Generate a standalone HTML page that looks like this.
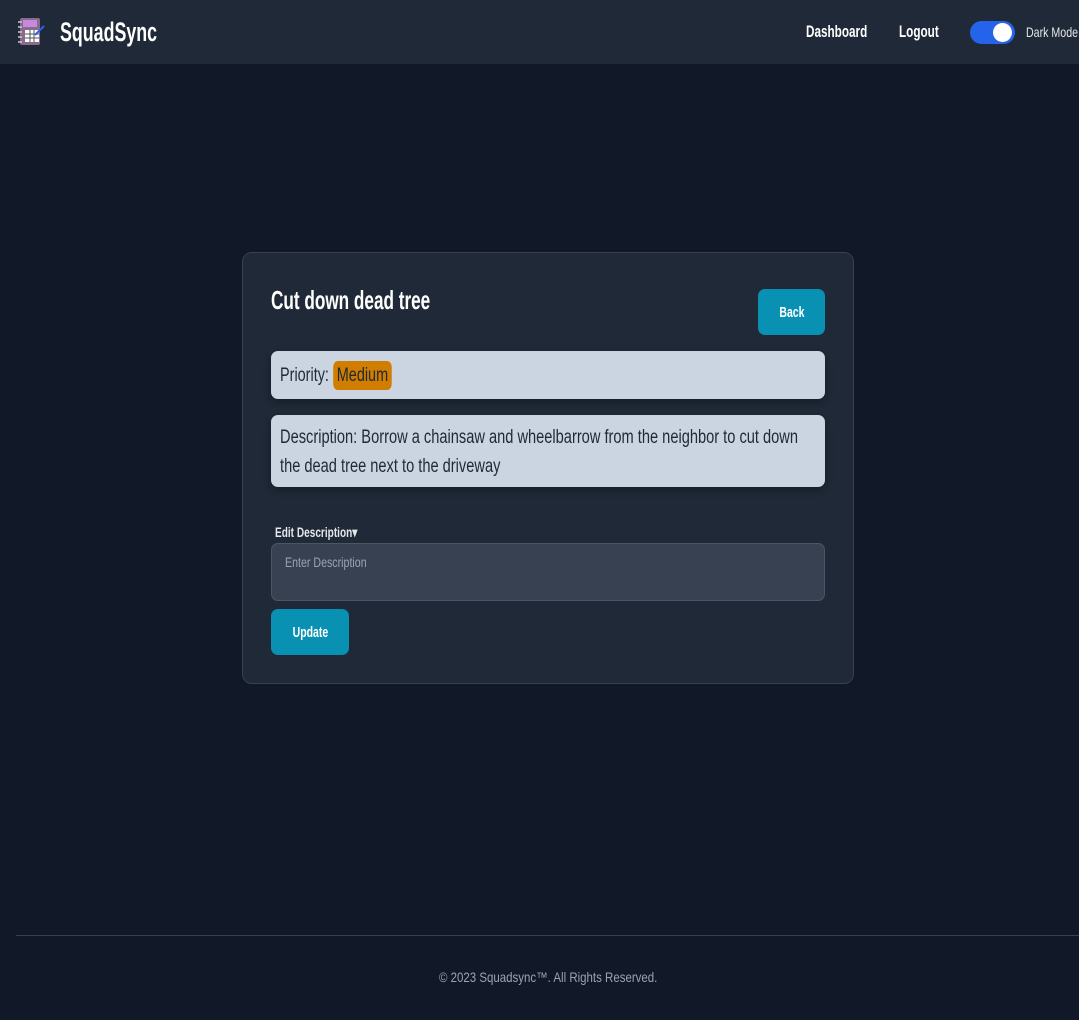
<!DOCTYPE html>
<html><head><meta charset="utf-8"><style>
*{box-sizing:border-box;margin:0;padding:0}
body{width:1079px;height:1020px;background:#111827;font-family:"Liberation Sans",sans-serif;color:#fff;position:relative;overflow:hidden}
.c{display:inline-block;transform:scaleX(.76);transform-origin:0 50%;white-space:nowrap}
.cc{display:inline-block;transform:scaleX(.76);transform-origin:50% 50%;white-space:nowrap}
.nav{position:absolute;left:0;top:0;width:1079px;height:64px;background:#1f2937}
.logo{position:absolute;left:60px;top:17px;font-size:27px;font-weight:bold}
.nl{position:absolute;top:22px;font-size:17px}
.tog{position:absolute;left:970px;top:21px;width:45px;height:23px;border-radius:12px;background:#2563eb}
.tog i{position:absolute;right:3px;top:2px;width:19px;height:19px;border-radius:50%;background:#fff}
.card{position:absolute;left:242px;top:252px;width:612px;height:432px;background:#1f2937;border:1px solid #374151;border-radius:10px}
h1{position:absolute;left:28px;top:32px;font-size:26px;font-weight:bold}
.btn{position:absolute;background:#0891b2;border-radius:7px;color:#fff;font-size:15px;font-weight:bold;display:flex;align-items:center;justify-content:center}
.box{position:absolute;left:28px;width:554px;background:#cbd5e1;border-radius:7px;color:#1f2937;font-size:19px;padding:8px 9px;box-shadow:0 3px 8px rgba(0,0,0,.3)}
.med{background:#d07d00;border-radius:6px;padding:4px 5px}
.ta{position:absolute;left:28px;top:290px;width:554px;height:58px;background:#374151;border:1px solid #4b5563;border-radius:7px;color:#9ca3af;font-size:14px;padding:10px 13px}
.foot{position:absolute;left:16px;top:935px;width:1063px;border-top:1px solid #374151}
.ft{position:absolute;left:0;width:1096px;top:969px;text-align:center;color:#9ca3af;font-size:14px}
</style></head><body>
<div class="nav">
<svg style="position:absolute;left:17px;top:17px" width="30" height="30" viewBox="0 0 30 30"><rect x="3" y="1" width="20" height="27" rx="2" fill="#8a6a8a"/><rect x="6" y="3" width="14" height="7" fill="#c58ae0"/><rect x="8" y="13" width="14" height="12" fill="#fff"/><path d="M8 17h14M8 21h14M13 13v12M17 13v12" stroke="#555" stroke-width="1"/><path d="M18 18l9-9" stroke="#2563eb" stroke-width="2"/><path d="M1 5h4M1 10h4M1 15h4M1 20h4M1 25h4" stroke="#ccc" stroke-width="1.5"/></svg>
<div class="logo"><span class="c" style="transform:scaleX(.66)">SquadSync</span></div>
<div class="nl" style="left:806px;font-weight:bold"><span class="c" style="transform:scaleX(.69)">Dashboard</span></div>
<div class="nl" style="left:899px;font-weight:bold"><span class="c" style="transform:scaleX(.69)">Logout</span></div>
<div class="tog"><i></i></div>
<div class="nl" style="left:1026px;font-size:14px;top:24px;color:#e5e7eb"><span class="c">Dark Mode</span></div>
</div>
<div class="card">
<h1><span class="c" style="transform:scaleX(.66)">Cut down dead tree</span></h1>
<div class="btn" style="left:515px;top:36px;width:67px;height:46px"><span class="cc" style="transform:scaleX(.7)">Back</span></div>
<div class="box" style="top:98px;height:48px;padding-top:14px"><span class="c">Priority: <span class="med">Medium</span></span></div>
<div class="box" style="top:162px;height:72px;line-height:29px;padding-top:8px"><span class="c" style="transform:scaleX(.77)">Description: Borrow a chainsaw and wheelbarrow from the neighbor to cut down</span><br><span class="c" style="transform:scaleX(.77)">the dead tree next to the driveway</span></div>
<div style="position:absolute;left:32px;top:271px;font-size:14px;color:#e5e7eb;font-weight:bold"><span class="c" style="transform:scaleX(.72)">Edit Description▾</span></div>
<div class="ta"><span class="c">Enter Description</span></div>
<div class="btn" style="left:28px;top:356px;width:78px;height:46px"><span class="cc" style="transform:scaleX(.7)">Update</span></div>
</div>
<div class="foot"></div>
<div class="ft"><span class="cc" style="transform:scaleX(.82)">© 2023 Squadsync™. All Rights Reserved.</span></div>
</body></html>
